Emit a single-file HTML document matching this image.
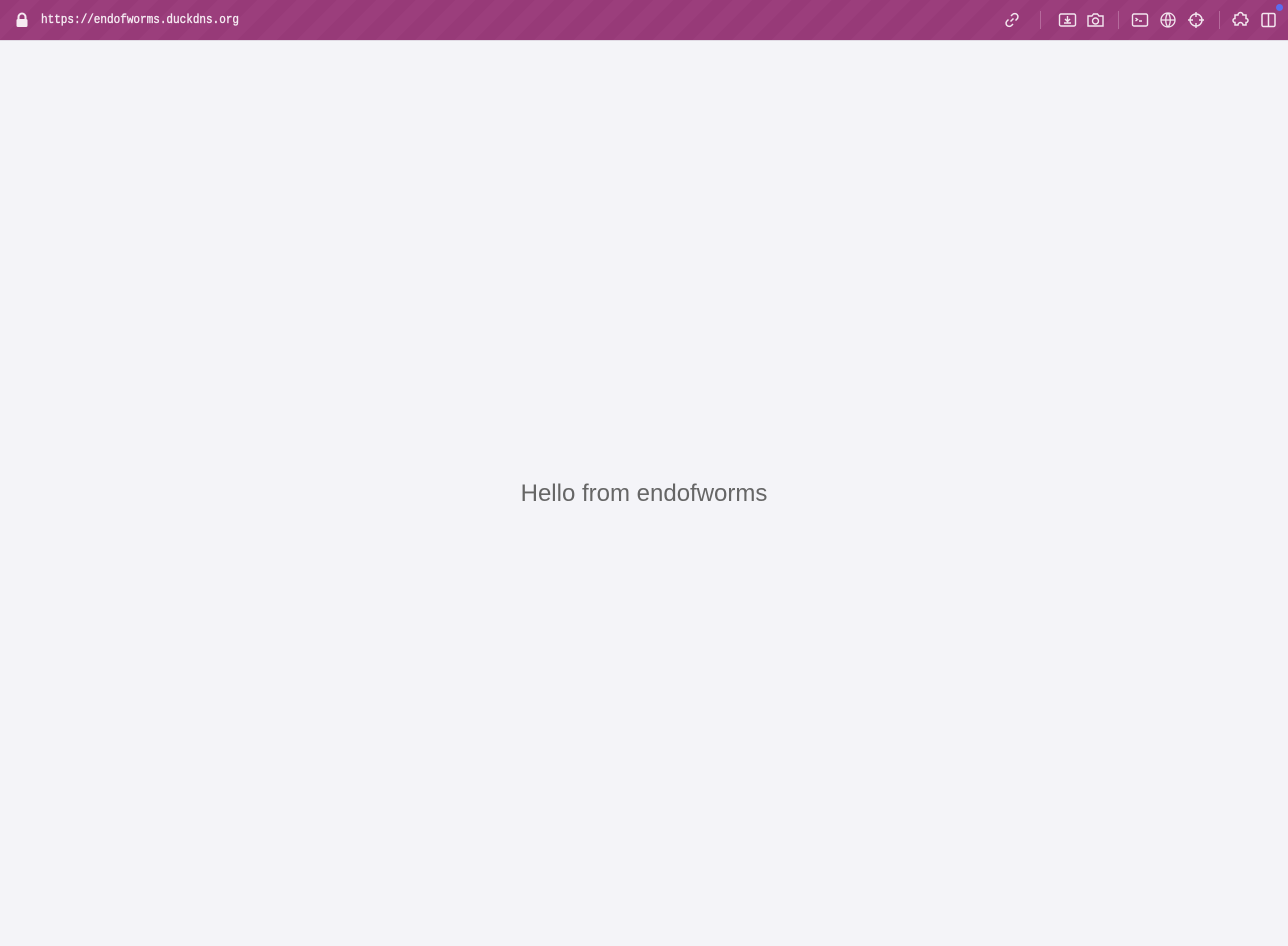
<!DOCTYPE html>
<html><head><style>
html,body{margin:0;padding:0;width:1288px;height:946px;overflow:hidden;background:#f4f4f8;}
.bar{position:absolute;left:0;top:0;width:1288px;height:40px;background:repeating-linear-gradient(135deg,#973a78 0 14px,#9b3e7c 14px 28px);border-bottom:1px solid #e0dbe4;}
.url{position:absolute;left:41px;top:14px;font:11px "Liberation Mono",monospace;color:#f6ecf3;letter-spacing:0;transform:scaleY(1.15);transform-origin:left top;-webkit-text-stroke:0.3px #f6ecf3}
.sep{position:absolute;top:11px;width:1px;height:18px;background:#b56a9c}
svg{position:absolute;}
.hello{position:absolute;left:0;width:1288px;top:480px;text-align:center;font:24px "Liberation Sans",sans-serif;color:#666;}
</style></head><body>
<div class="bar">
<svg style="left:15px;top:12px" width="14" height="16" viewBox="0 0 14 16"><path d="M3.5 7V5a3.5 3.5 0 0 1 7 0v2" stroke="#f6eaf2" stroke-width="2" fill="none"/><rect x="1.5" y="7" width="11" height="8" rx="1.5" fill="#f6eaf2"/></svg>
<div class="url">https://endofworms.duckdns.org</div>
<svg style="left:1003px;top:11px" width="18" height="18" viewBox="0 0 18 18" fill="none" stroke="#f3e6ef" stroke-width="1.5"><path d="M7.5 10.5l3-3M8 5l1.5-1.5a3 3 0 0 1 4.5 4.5L12.5 9.5M10 13l-1.5 1.5A3 3 0 0 1 4 10L5.5 8.5"/></svg>
<div class="sep" style="left:1040px"></div>
<svg style="left:1058px;top:11px" width="19" height="18" viewBox="0 0 19 18" fill="none" stroke="#f3e6ef" stroke-width="1.4"><rect x="1.5" y="3" width="16" height="12" rx="1.5"/><path d="M9.5 5v5M7 8l2.5 2.5L12 8M6 12h7"/></svg>
<svg style="left:1086px;top:11px" width="19" height="18" viewBox="0 0 19 18" fill="none" stroke="#f3e6ef" stroke-width="1.4"><path d="M2 5h4l1.5-2h4L13 5h4v10H2z"/><circle cx="9.5" cy="10" r="3"/></svg>
<div class="sep" style="left:1118px"></div>
<svg style="left:1131px;top:11px" width="18" height="18" viewBox="0 0 18 18" fill="none" stroke="#f3e6ef" stroke-width="1.4"><rect x="1.5" y="3" width="15" height="12" rx="1.5"/><path d="M4.5 7l2 1.5-2 1.5M8 10h3"/></svg>
<svg style="left:1159px;top:11px" width="18" height="18" viewBox="0 0 18 18" fill="none" stroke="#f3e6ef" stroke-width="1.3"><circle cx="9" cy="9" r="7"/><path d="M2 9h14M9 2c-3 3-3 11 0 14M9 2c3 3 3 11 0 14"/></svg>
<svg style="left:1187px;top:11px" width="18" height="18" viewBox="0 0 18 18" fill="none" stroke="#f3e6ef" stroke-width="1.4"><circle cx="9" cy="9" r="6"/><path d="M9 1v5M9 12v5M1 9h5M12 9h5"/></svg>
<div class="sep" style="left:1219px"></div>
<svg style="left:1230px;top:11px" width="21" height="18" viewBox="0 0 21 18" fill="none" stroke="#f3e6ef" stroke-width="1.5"><path d="M5 4h3a2.5 2.5 0 0 1 5 0h3v3.5a2 2 0 0 1 0 4V14h-3a2.5 2.5 0 0 0-5 0H5v-2.5a2 2 0 0 1 0-4z"/></svg>
<svg style="left:1261px;top:12px" width="15" height="16" viewBox="0 0 15 16" fill="none" stroke="#f3e6ef" stroke-width="1.5"><rect x="1" y="1.5" width="13" height="13" rx="1.5"/><path d="M7.5 1.5v13"/></svg>
<div style="position:absolute;left:1276px;top:4px;width:7px;height:7px;border-radius:50%;background:#5b6cf0"></div>
</div>
<div class="hello">Hello from endofworms</div>
</body></html>
